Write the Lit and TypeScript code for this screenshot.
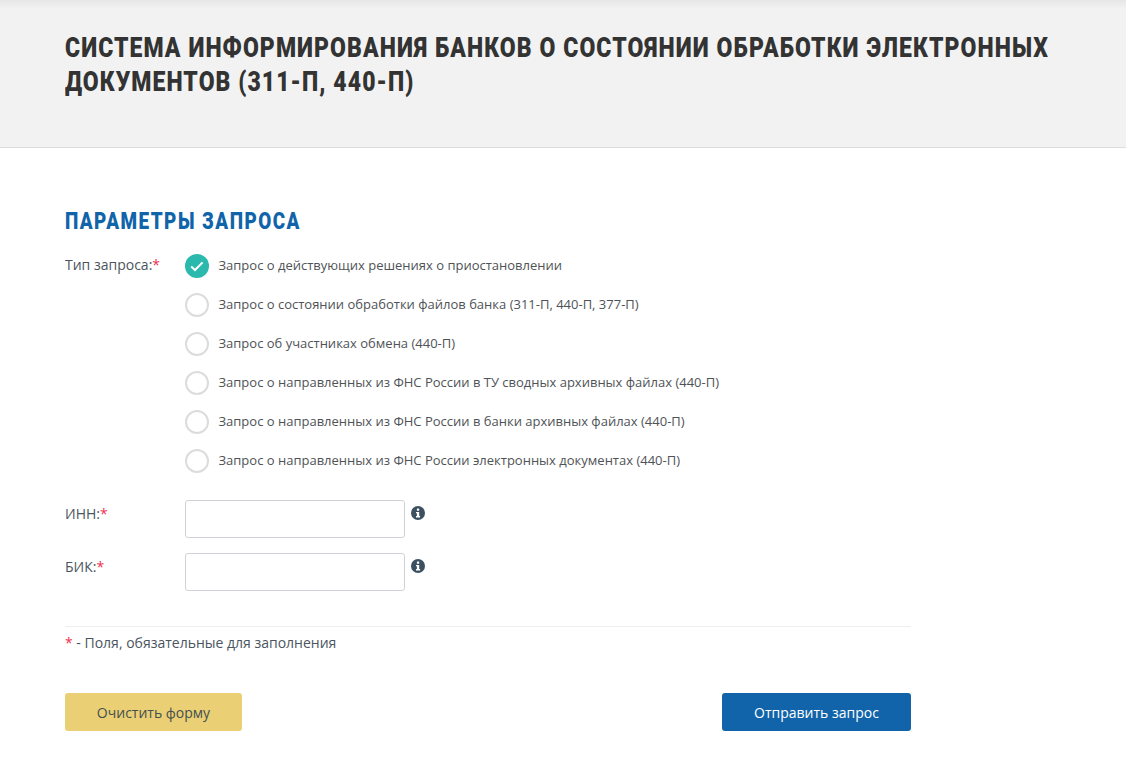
import { LitElement, html, css } from "lit";
import { customElement } from "lit/decorators.js";

const OPTIONS = [
  "Запрос о действующих решениях о приостановлении",
  "Запрос о состоянии обработки файлов банка (311-П, 440-П, 377-П)",
  "Запрос об участниках обмена (440-П)",
  "Запрос о направленных из ФНС России в ТУ сводных архивных файлах (440-П)",
  "Запрос о направленных из ФНС России в банки архивных файлах (440-П)",
  "Запрос о направленных из ФНС России электронных документах (440-П)",
];

@customElement("app-root")
export class AppRoot extends LitElement {
  static styles = css`
    :host { display: block; height: 766px; overflow: hidden; background: #fff; font-family: "Open Sans", sans-serif; color: #4a5560; font-size: 14px; }
    .head { height: 148px; box-sizing: border-box; background: linear-gradient(#e6e6e6 0, #f2f2f2 9px); border-bottom: 1px solid #dcdcdc; padding: 31px 65px 0; overflow: hidden; }
    h1 { margin: 0; width: 1230px; font: 900 28px/34px Roboto, sans-serif; letter-spacing: 1.32px; color: #333; transform: scaleX(.82); transform-origin: left top; }
    .main { width: 846px; padding: 59px 0 0 65px; }
    h2 { margin: 0; font: 900 23px/30px Roboto, sans-serif; letter-spacing: 1.8px; color: #1164a9; transform: scaleX(.82); transform-origin: left top; white-space: nowrap; }
    .row { display: flex; }
    .label { width: 120px; flex: none; line-height: 20px; }
    .types .label { padding-top: 1px; }
    .req { color: #f0324f; }
    .types { margin-top: 17px; }
    .options { display: flex; flex-direction: column; gap: 15px; }
    .opt { display: flex; align-items: center; gap: 9.5px; height: 24px; font-size: 13px; color: #4f5357; }
    .opt-text { margin-bottom: 2px; }
    .radio { width: 24px; height: 24px; box-sizing: border-box; border-radius: 50%; border: 2px solid #dcdcdc; flex: none; }
    .radio.on { border: none; background: #2bb9ad; display: flex; align-items: center; justify-content: center; }
    .field { margin-top: 15px; }
    .types + .field { margin-top: 27px; }
    .field .label { padding-top: 4px; }
    .input { width: 220px; height: 38px; box-sizing: border-box; border: 1px solid #cfd3d8; border-radius: 3px; background: #fff; }
    .info { margin: 6px 0 0 5.5px; width: 14px; height: 14px; }
    .note { margin-top: 35px; border-top: 1px solid #eee; padding-top: 6px; line-height: 20px; }
    .actions { display: flex; justify-content: space-between; margin-top: 40px; }
    .btn { height: 38px; box-sizing: border-box; border: none; border-radius: 3px; font: 14px "Open Sans", sans-serif; padding: 0; }
    .clear { width: 177px; background: #eacf75; color: #45504f; }
    .send { width: 189px; background: #1164a9; color: #fff; }
  `;

  private infoIcon() {
    return html`<svg class="info" viewBox="0 0 14 14"><circle cx="7" cy="7" r="7" fill="#3c5060"/><rect x="5.9" y="2.6" width="2.3" height="2.2" rx=".5" fill="#fff"/><path d="M5 5.9h3.2v4.2h.9v1.3H5v-1.3h.9V7.2H5z" fill="#fff"/></svg>`;
  }

  render() {
    return html`
      <header class="head">
        <h1>СИСТЕМА ИНФОРМИРОВАНИЯ БАНКОВ О СОСТОЯНИИ ОБРАБОТКИ ЭЛЕКТРОННЫХ ДОКУМЕНТОВ (311-П, 440-П)</h1>
      </header>
      <main class="main">
        <h2>ПАРАМЕТРЫ ЗАПРОСА</h2>
        <div class="row types">
          <div class="label">Тип запроса:<span class="req">*</span></div>
          <div class="options">
            ${OPTIONS.map((o, i) => html`
              <div class="opt">
                ${i === 0
                  ? html`<span class="radio on"><svg width="14" height="11" viewBox="0 0 14 11"><path d="M1.2 5.6 5 9 12.6 1.4" fill="none" stroke="#fff" stroke-width="2"/></svg></span>`
                  : html`<span class="radio"></span>`}
                <span class="opt-text">${o}</span>
              </div>`)}
          </div>
        </div>
        <div class="row field">
          <div class="label">ИНН:<span class="req">*</span></div>
          <div class="input"></div>
          ${this.infoIcon()}
        </div>
        <div class="row field">
          <div class="label">БИК:<span class="req">*</span></div>
          <div class="input"></div>
          ${this.infoIcon()}
        </div>
        <div class="note"><span class="req">*</span> - Поля, обязательные для заполнения</div>
        <div class="actions">
          <button class="btn clear">Очистить форму</button>
          <button class="btn send">Отправить запрос</button>
        </div>
      </main>
    `;
  }
}
